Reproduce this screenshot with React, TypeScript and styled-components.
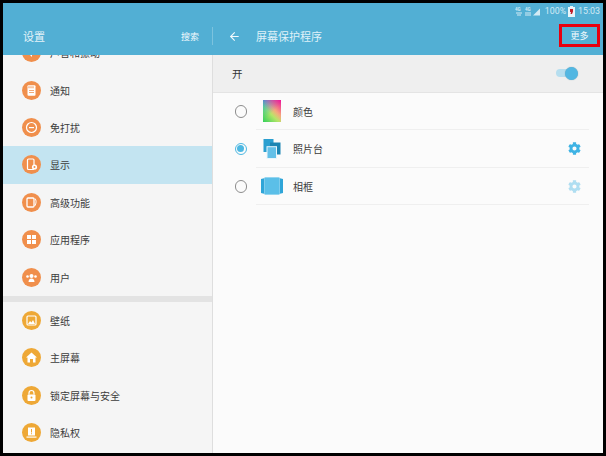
import React from "react";
import styled, { createGlobalStyle } from "styled-components";
import { ArrowLeft } from "lucide-react";
import { FaCog } from "react-icons/fa";

const Global = createGlobalStyle`
  html, body { margin: 0; padding: 0; background: #000; }
  * { box-sizing: border-box; }
`;
const Screen = styled.div`
  width: 606px; height: 456px; padding: 3px; background: #000; overflow: hidden;
  font-family: "Noto Sans CJK SC", "Noto Sans", sans-serif;
`;
const Device = styled.div`
  width: 600px; height: 450px; display: flex; flex-direction: column; overflow: hidden; background: #fbfbfb;
`;
const Header = styled.header`
  height: 52px; flex: none; background: #52afd4; color: #fff; position: relative; z-index: 2;
  display: flex; flex-direction: column;
`;
const StatusBar = styled.div`
  height: 16px; display: flex; align-items: center; justify-content: flex-end; padding: 0 3px 0 0;
  font-family: "Roboto", sans-serif; font-size: 8.8px; color: #d3ebf4;
`;
const StatusText = styled.span<{ $left: number; $right: number }>`
  margin: 0 ${p => p.$right}px 0 ${p => p.$left}px;
`;
const TitleRow = styled.div`
  flex: 1; display: flex; align-items: center; padding-bottom: 2px;
`;
const LeftTitle = styled.div`
  width: 210px; height: 18px; display: flex; align-items: center; justify-content: space-between;
  padding: 0 13px 0 20px; border-right: 1px solid #7cc3de;
`;
const MainTitleWrap = styled.div`
  flex: 1; display: flex; align-items: center; padding-left: 15px; height: 22px; position: relative;
`;
const AppTitle = styled.span`
  font-size: 11px; color: #e4f3f9;
`;
const SearchLabel = styled.span`
  font-size: 9px; color: #f2fafd;
`;
const ScreenTitle = styled.span`
  font-size: 11px; color: #dff1f8; margin-left: 15px;
`;
const MoreButton = styled.div`
  position: absolute; left: 346px; top: -1px; width: 41px; height: 23px;
  border: 3px solid #e8000f; font-size: 9px; color: #f4fbfd;
  display: flex; align-items: center; justify-content: center;
`;
const Body = styled.div`
  flex: 1; min-height: 0; display: flex;
`;
const Sidebar = styled.nav`
  width: 210px; flex: none; background: #f5f5f5; border-right: 1px solid #dedede; overflow: hidden;
`;
const SideList = styled.div`
  margin-top: -21px;
`;
const SideRow = styled.div<{ $active?: boolean }>`
  height: 37.4px; display: flex; align-items: center; gap: 9px; padding-left: 19px;
  background: ${p => (p.$active ? "#c3e4f1" : "transparent")};
  font-size: 10px; color: #3c3c3c;
`;
const SideGap = styled.div`
  height: 6px; background: #e3e3e3;
`;
const Badge = styled.span<{ $color: string }>`
  width: 19px; height: 19px; border-radius: 50%; background: ${p => p.$color};
  display: flex; align-items: center; justify-content: center; flex: none;
`;
const Main = styled.main`
  flex: 1; min-width: 0; display: flex; flex-direction: column; background: #fbfbfb;
`;
const SwitchRow = styled.div`
  height: 37.5px; flex: none; background: #efefef; border-bottom: 1px solid #e4e4e4;
  display: flex; align-items: center; justify-content: space-between; padding: 0 25px 0 19px;
  font-size: 10.5px; color: #333;
`;
const Toggle = styled.span`
  width: 22px; height: 13px; position: relative; display: block;
  &::before { content: ""; position: absolute; left: 0; top: 2.5px; width: 17px; height: 8px; border-radius: 4px; background: #b6deef; }
  &::after { content: ""; position: absolute; right: 0; top: 0; width: 13px; height: 13px; border-radius: 50%; background: #52b7e2; box-shadow: 0 0 1px #7a9aa8; }
`;
const OptionRow = styled.div`
  height: 37.5px; flex: none; display: flex; align-items: center; position: relative; padding-left: 21.5px;
  &::after { content: ""; position: absolute; left: 43px; right: 14px; bottom: 0; height: 1px; background: #efefef; }
`;
const Radio = styled.span<{ $on?: boolean }>`
  width: 12.5px; height: 12.5px; border-radius: 50%; flex: none; display: flex; align-items: center; justify-content: center;
  border: 1px solid ${p => (p.$on ? "#4db8e2" : "#8d8d8d")};
  &::after { content: ""; width: 7px; height: 7px; border-radius: 50%; background: ${p => (p.$on ? "#4db8e2" : "transparent")}; }
`;
const IconSlot = styled.span`
  width: 22px; height: 24px; margin-left: 14px; flex: none; display: flex; align-items: center; justify-content: center;
`;
const ColorSwatch = styled.span`
  display: block; width: 17.5px; height: 22px;
  background:
    linear-gradient(225deg, #f0109a 0%, rgba(240,16,154,0) 60%),
    linear-gradient(45deg, #2fd05a 0%, rgba(47,208,90,0) 60%),
    linear-gradient(135deg, #1fb0ec 0%, rgba(31,176,236,0) 55%),
    #f8f070;
`;
const OptionLabel = styled.span`
  font-size: 10px; color: #3c3c3c; margin-left: 10px; flex: 1;
`;
const Gear = styled(FaCog)<{ $dim?: boolean }>`
  width: 13px; height: 13px; margin-right: 22px; color: #3fb3e4; opacity: ${p => (p.$dim ? 0.4 : 1)};
`;

const W = "#fff";
const glyphs: Record<string, React.ReactNode> = {
  sound: <path d="M5 8h2l3-3v9l-3-3H5z" fill={W} />,
  notify: <><rect x="5.500" y="4.300" width="8" height="10.400" rx="1" fill={W} /><path d="M6.500 5.300h1v2h-1zM8.500 5.300h1v2h-1zM10.500 5.300h1v2h-1zM7 9h5v.8H7zM7 11h5v.8H7z" fill="#f08f4c" /></>,
  dnd: <><circle cx="9.5" cy="9.5" r="5" fill="none" stroke={W} strokeWidth="1.2" /><path d="M7 9h5v1.2H7z" fill={W} /></>,
  display: <><rect x="5.500" y="4" width="6.500" height="10.500" rx="1" fill="none" stroke={W} strokeWidth="1.2" /><circle cx="12.500" cy="12" r="2.600" fill={W} /><circle cx="12.500" cy="12" r="1" fill="#f08f4c" /></>,
  advanced: <><rect x="5" y="5" width="7" height="9" rx="1" fill="none" stroke={W} strokeWidth="1.300" /><path d="M13 5.500c1.500 1.500 1.500 5-.3 7.500" fill="none" stroke={W} strokeWidth="1" /></>,
  apps: <path d="M5 5h4v4H5zM10 5h4v4h-4zM5 10h4v4H5zM10 10h4v4h-4z" fill={W} />,
  users: <><circle cx="9.500" cy="8" r="2" fill={W} /><path d="M6.500 14c0-2.500 1.500-3.500 3-3.500s3 1 3 3.500z" fill={W} /><circle cx="5.500" cy="8.500" r="1.300" fill={W} /><circle cx="13.500" cy="8.500" r="1.300" fill={W} /></>,
  wallpaper: <><rect x="5" y="5" width="9" height="9" rx="1" fill="none" stroke={W} strokeWidth="1.2" /><path d="M6 13l2-3 1.500 1.500L11 9l2 4z" fill={W} /></>,
  home: <path d="M9.500 4.500L15 9.500h-1.500V14.500h-2.500v-3.500H8v3.500H5.500V9.500H4z" fill={W} />,
  lock: <><path d="M7 8.500V7a2.500 2.500 0 0 1 5 0v1.500" fill="none" stroke={W} strokeWidth="1.200" /><rect x="5.500" y="8.500" width="8" height="6.500" rx="1" fill={W} /><circle cx="9.500" cy="11.500" r="1" fill="#eea836" /></>,
  privacy: <><path d="M6 4.500h7v8H6z" fill={W} /><path d="M9 6h1v3.500H9zM9 10.200h1v1H9z" fill="#eea836" /><path d="M4.500 13.500h10v1.200h-10z" fill={W} /></>,
};

const Glyph = ({ name }: { name: string }) => (
  <svg width="19" height="19" viewBox="0 0 19 19">{glyphs[name]}</svg>
);

const ORANGE = "#f08f4c";
const YELLOW = "#eea836";
const groupA = [
  { n: "sound", t: "声音和振动" },
  { n: "notify", t: "通知" },
  { n: "dnd", t: "免打扰" },
  { n: "display", t: "显示", active: true },
  { n: "advanced", t: "高级功能" },
  { n: "apps", t: "应用程序" },
  { n: "users", t: "用户" },
];
const groupB = [
  { n: "wallpaper", t: "壁纸" },
  { n: "home", t: "主屏幕" },
  { n: "lock", t: "锁定屏幕与安全" },
  { n: "privacy", t: "隐私权" },
];

const NetworkIcon = () => (
  <svg width="26" height="10" viewBox="0 0 26 10" fill="#d3ebf4">
    <text x="0" y="4.500" fontSize="4.500" fontWeight="700" fontFamily="Roboto, sans-serif">4G</text>
    <path d="M1 6.500h6v1H1zM2 8.500h4v1H2z" />
    <text x="10" y="4.500" fontSize="4.500" fontWeight="700" fontFamily="Roboto, sans-serif">4G</text>
    <path d="M10 6.500h6v1h-6zM10 8.500h6v1h-6z" />
    <path d="M18 9.500L25 2.500v7z" />
  </svg>
);
const BatteryIcon = () => (
  <svg width="7" height="11" viewBox="0 0 7 11">
    <rect x="2" y="0" width="3" height="1.500" fill="#e8f5fa" />
    <rect x="0" y="1" width="7" height="10" fill="#e8f5fa" />
    <path d="M2 3h3v2.500L4 8H2.500L3 6H2z" fill="#c2202a" />
  </svg>
);
const PhotoIcon = () => (
  <svg width="18" height="20" viewBox="0 0 18 20">
    <rect x="0.500" y="0" width="10" height="13" fill="#2a9fd0" />
    <rect x="7" y="3.500" width="10.500" height="12" fill="#1c85b3" />
    <rect x="4" y="7.700" width="9.500" height="11.800" fill="#63c0e8" stroke="#e8f6fc" strokeWidth="1" />
  </svg>
);
const FrameIcon = () => (
  <svg width="22" height="18" viewBox="0 0 22 18">
    <path d="M0 2l4-1v16l-4-1zM22 2l-4-1v16l4-1z" fill="#2fa5d8" />
    <rect x="3.500" y="0.300" width="15" height="17.400" rx="1" fill="#5bbfe8" stroke="#a8def3" strokeWidth="0.600" />
  </svg>
);

export default function App() {
  return (
    <Screen>
      <Global />
      <Device>
        <Header>
          <StatusBar>
            <NetworkIcon />
            <StatusText $left={4} $right={2}>100%</StatusText>
            <BatteryIcon />
            <StatusText $left={3} $right={0}>15:03</StatusText>
          </StatusBar>
          <TitleRow>
            <LeftTitle>
              <AppTitle>设置</AppTitle>
              <SearchLabel>搜索</SearchLabel>
            </LeftTitle>
            <MainTitleWrap>
              <ArrowLeft size={13} strokeWidth={2} color="#f2fafd" />
              <ScreenTitle>屏幕保护程序</ScreenTitle>
              <MoreButton>更多</MoreButton>
            </MainTitleWrap>
          </TitleRow>
        </Header>
        <Body>
          <Sidebar>
            <SideList>
              {groupA.map(r => (
                <SideRow key={r.n} $active={r.active}>
                  <Badge $color={ORANGE}><Glyph name={r.n} /></Badge>
                  {r.t}
                </SideRow>
              ))}
              <SideGap />
              {groupB.map(r => (
                <SideRow key={r.n}>
                  <Badge $color={YELLOW}><Glyph name={r.n} /></Badge>
                  {r.t}
                </SideRow>
              ))}
            </SideList>
          </Sidebar>
          <Main>
            <SwitchRow>
              开
              <Toggle />
            </SwitchRow>
            <OptionRow>
              <Radio />
              <IconSlot><ColorSwatch /></IconSlot>
              <OptionLabel>颜色</OptionLabel>
            </OptionRow>
            <OptionRow>
              <Radio $on />
              <IconSlot><PhotoIcon /></IconSlot>
              <OptionLabel>照片台</OptionLabel>
              <Gear />
            </OptionRow>
            <OptionRow>
              <Radio />
              <IconSlot><FrameIcon /></IconSlot>
              <OptionLabel>相框</OptionLabel>
              <Gear $dim />
            </OptionRow>
          </Main>
        </Body>
      </Device>
    </Screen>
  );
}
